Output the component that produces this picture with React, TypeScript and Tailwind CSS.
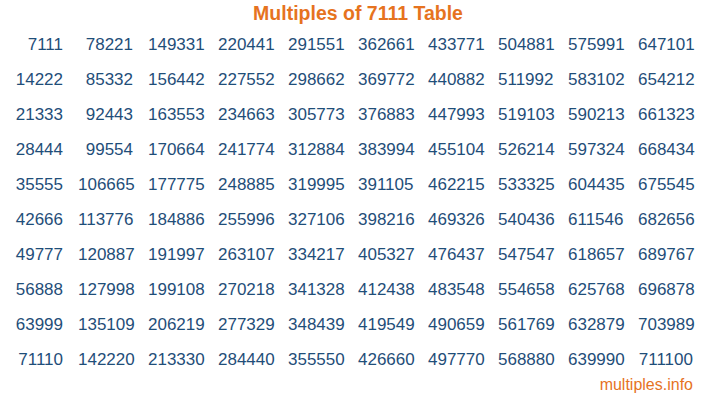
const BASE = 7111;
const rows = Array.from({ length: 10 }, (_, r) => r);
const cols = Array.from({ length: 10 }, (_, c) => c);

export default function App() {
  return (
    <div className="w-[716px] h-[400px] bg-white font-['Liberation_Sans',Arial,sans-serif] overflow-hidden">
      <h1 className="pt-[2px] text-center text-[19.5px] leading-[22px] font-bold text-[#e6731f]">
        Multiples of 7111 Table
      </h1>

      <div className="mx-auto mt-[3px] grid w-[700px] grid-cols-10">
        {rows.map((r) =>
          cols.map((c) => (
            <div
              key={`${r}-${c}`}
              className="h-[35px] pr-[15px] text-right text-[17px] leading-[35px] text-[#1f4e79]"
            >
              {BASE * (c * 10 + r + 1)}
            </div>
          )),
        )}
      </div>

      <div className="-mt-[2px] pr-[23px] text-right text-[16px] leading-[20px] text-[#e6731f]">
        multiples.info
      </div>
    </div>
  );
}
